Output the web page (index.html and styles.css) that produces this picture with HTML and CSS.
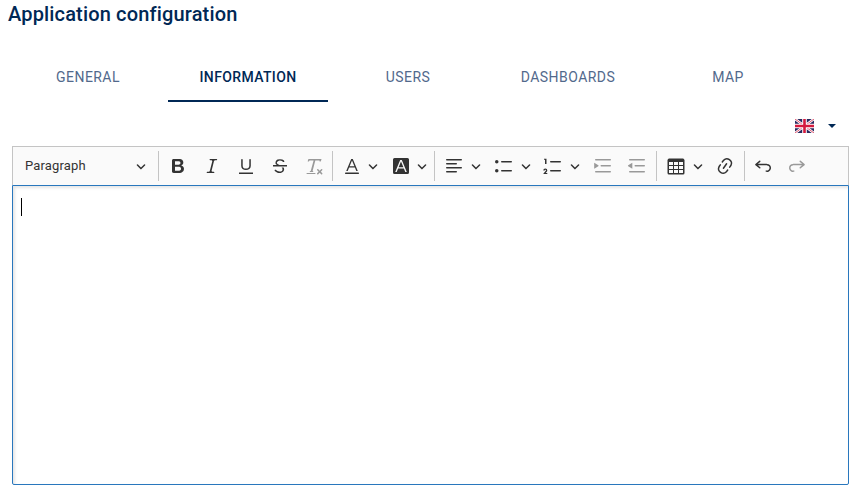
FILE: index.html
```html
<!DOCTYPE html>
<html lang="en">
<head>
<meta charset="utf-8">
<title>Application configuration</title>
<link rel="stylesheet" href="styles.css">
</head>
<body>
<svg class="defs" aria-hidden="true"><defs>
<symbol id="chev" viewBox="0 0 10 10"><path d="M.941 4.523a.75.75 0 1 1 1.06-1.06l3.006 3.005 3.005-3.005a.75.75 0 1 1 1.06 1.06l-3.549 3.55a.75.75 0 0 1-1.168-.136L.941 4.523z"/></symbol>
</defs></svg>
<h1 class="title">Application configuration</h1>
<nav class="tabs">
<a class="tab">GENERAL</a><a class="tab active">INFORMATION</a><a class="tab">USERS</a><a class="tab">DASHBOARDS</a><a class="tab">MAP</a>
</nav>
<div class="language">
<svg class="flag" viewBox="0 0 19 14"><path fill="#29295f" d="M0 0h19v14H0z"/><path stroke="#fff" stroke-width="2.6" d="M0 0l19 14M19 0L0 14"/><path stroke="#d8294a" stroke-width=".8" d="M0 0l19 14M19 0L0 14"/><path stroke="#fff" stroke-width="4.6" d="M9.5 0v14M0 7h19"/><path stroke="#d5193d" stroke-width="2.6" d="M9.5 0v14M0 7h19"/></svg>
<span class="caret-down"></span>
</div>
<div class="editor">
<div class="toolbar">
<div class="heading"><span class="label">Paragraph</span><svg class="chev"><use href="#chev"/></svg></div>
<i class="sep"></i>
<div class="group basic">
<span class="btn"><svg class="icon" viewBox="0 0 20 20"><path d="M10.187 17H5.773c-.637 0-1.092-.138-1.364-.415-.273-.277-.409-.718-.409-1.323V4.738c0-.617.14-1.062.419-1.332.279-.27.73-.406 1.354-.406h4.68c.69 0 1.288.041 1.793.124.506.083.96.242 1.36.478.341.197.644.447.906.75a3.262 3.262 0 0 1 .808 2.162c0 1.401-.722 2.426-2.167 3.075C15.05 10.175 16 11.315 16 13.01a3.756 3.756 0 0 1-2.296 3.504 6.1 6.1 0 0 1-1.517.377c-.571.073-1.238.11-2 .11zm-.217-6.217H7v4.087h3.069c1.977 0 2.965-.69 2.965-2.072 0-.707-.256-1.22-.768-1.537-.512-.319-1.277-.478-2.296-.478zM7 5.13v3.619h2.606c.729 0 1.292-.067 1.69-.2a1.6 1.6 0 0 0 .91-.765c.165-.267.247-.566.247-.897 0-.707-.26-1.176-.778-1.409-.519-.232-1.31-.348-2.375-.348H7z"/></svg></span>
<span class="btn"><svg class="icon" viewBox="0 0 20 20"><path d="m9.586 14.633.021.004c-.036.335.095.655.393.962.082.083.173.15.274.201h1.474a.6.6 0 1 1 0 1.2H5.304a.6.6 0 0 1 0-1.2h1.15c.474-.07.809-.182 1.005-.334.157-.122.291-.32.404-.597l2.416-9.55a1.053 1.053 0 0 0-.281-.823 1.12 1.12 0 0 0-.442-.296H8.15a.6.6 0 0 1 0-1.2h6.443a.6.6 0 1 1 0 1.2h-1.195c-.376.056-.65.155-.823.296-.215.175-.423.439-.623.79l-2.366 9.347z"/></svg></span>
<span class="btn"><svg class="icon" viewBox="0 0 20 20"><path d="M3 18v-1.5h14V18zM5.2 10V3.6c0-.4.4-.6.8-.6.3 0 .7.2.7.6v6.2c0 2 1.3 2.8 3.2 2.8 1.9 0 3.4-.9 3.4-2.9V3.6c0-.3.4-.5.8-.5.3 0 .7.2.7.5V10c0 2.7-2.2 4-4.9 4-2.6 0-4.7-1.2-4.7-4z"/></svg></span>
<span class="btn"><svg class="icon" viewBox="0 0 20 20"><path d="M7 16.4c-.8-.4-1.5-.9-2.2-1.5a.6.6 0 0 1-.2-.5l.3-.6h1c1 1.2 2.1 1.7 3.7 1.7 1 0 1.8-.3 2.3-.6.6-.4.6-1.2.6-1.3.2-1.2-.9-2.1-.9-2.1h2.1c.3.7.4 1.2.4 1.7v.8l-.6 1.2c-.6.8-1.1 1-1.6 1.2a6 6 0 0 1-2.4.6c-1 0-1.8-.3-2.5-.6zM6.8 9 6 8.3c-.4-.5-.5-.8-.5-1.6 0-.7.1-1.3.5-1.8.4-.6 1-1 1.6-1.3a6.3 6.3 0 0 1 4.7 0 4 4 0 0 1 1.7 1l.3.7c0 .1.2.4-.2.7-.4.2-.9.1-1 0a3 3 0 0 0-1.2-1c-.4-.2-1-.3-2-.4-.7 0-1.4.2-2 .6-.8.6-1 .8-1 1.5 0 .8.5 1 1.2 1.5.6.4 1.1.7 1.9 1H6.8zM3 10.5V9h14v1.5z"/></svg></span>
<span class="btn off"><svg class="icon" viewBox="0 0 20 20"><path d="M8.69 14.915c.053.052.173.083.36.093a.366.366 0 0 1 .345.485l-.003.01a.738.738 0 0 1-.697.497h-2.67a.374.374 0 0 1-.353-.496l.013-.038a.681.681 0 0 1 .644-.458c.197-.012.325-.043.386-.093a.28.28 0 0 0 .072-.11L9.592 4.5H6.269c-.359-.017-.609.013-.75.09-.142.078-.289.265-.442.563-.192.29-.516.464-.864.464H4.17a.43.43 0 0 1-.407-.569L4.46 3h13.08l-.62 2.043a.81.81 0 0 1-.775.574h-.114a.486.486 0 0 1-.486-.486c.001-.284-.054-.464-.167-.54-.112-.076-.367-.106-.766-.091h-3.28l-2.68 10.257c-.006.074.007.127.038.158zM3 17h8a.5.5 0 1 1 0 1H3a.5.5 0 1 1 0-1zm11.299 1.17a.75.75 0 1 1-1.06-1.06l1.414-1.415-1.415-1.414a.75.75 0 0 1 1.06-1.06l1.415 1.414 1.414-1.415a.75.75 0 1 1 1.06 1.06l-1.413 1.415 1.414 1.415a.75.75 0 0 1-1.06 1.06l-1.415-1.414-1.414 1.414z"/></svg></span>
</div>
<i class="sep"></i>
<div class="group colors">
<span class="drop"><span class="btn"><svg class="icon" viewBox="0 0 20 20"><path d="M12.4 10.3 10 4.5l-2.4 5.8h4.8zm.5 1.2H7.1L5.7 15H4.2l5-12h1.6l5 12h-1.5l-1.4-3.5zM16.3 18H3.7a.75.75 0 0 1 0-1.5h12.6a.75.75 0 0 1 0 1.5z"/></svg></span><svg class="chev"><use href="#chev"/></svg></span>
<span class="drop"><span class="btn"><svg class="icon" viewBox="0 0 20 20"><path fill-rule="evenodd" d="M3.5 2h13A1.5 1.5 0 0 1 18 3.500v13a1.500 1.500 0 0 1-1.500 1.500h-13A1.500 1.500 0 0 1 2 16.500v-13A1.500 1.500 0 0 1 3.500 2zM9.200 4l-5 12h1.500l1.400-3.500h5.800l1.400 3.500h1.500l-5-12zm.8 1.500 2.400 5.800H7.600z"/></svg></span><svg class="chev"><use href="#chev"/></svg></span>
</div>
<i class="sep"></i>
<div class="group blocks">
<span class="drop"><span class="btn"><svg class="icon" viewBox="0 0 20 20"><path class="line" d="M2.750 3.750h14.500M2.750 7.750h9.500M2.750 11.750h14.500M2.750 15.750h9.500"/></svg></span><svg class="chev"><use href="#chev"/></svg></span>
<span class="drop"><span class="btn"><svg class="icon" viewBox="0 0 20 20"><circle cx="2.750" cy="5.750" r="1.750"/><circle cx="2.750" cy="14.750" r="1.750"/><path class="line" d="M7.750 5.750h9.500M7.750 14.750h9.500"/></svg></span><svg class="chev"><use href="#chev"/></svg></span>
<span class="drop"><span class="btn"><svg class="icon" viewBox="0 0 20 20"><path d="M3.500 3v5H2V3.700H1v-1h2.500V3zM.343 17.857l2.590-3.257H2.920a.6.6 0 1 0-1.040 0H.302a2 2 0 1 1 3.995 0h-.001c-.048.405-.16.734-.333.988-.175.254-.59.692-1.244 1.312H4.300v1h-4l.043-.043z"/><path class="line" d="M7.750 5.750h9.500M7.750 14.750h9.500"/></svg></span><svg class="chev"><use href="#chev"/></svg></span>
<span class="btn off"><svg class="icon" viewBox="0 0 20 20"><path d="M1.200 6.800 5.300 9.350q.6.400 0 .8L1.200 12.700z"/><path class="line" d="M2.750 3.750h14.500M8.250 9.750h9M2.750 15.750h14.500"/></svg></span>
<span class="btn off"><svg class="icon" viewBox="0 0 20 20"><path d="M5.300 6.800 1.200 9.350q-.6.400 0 .8L5.300 12.700z"/><path class="line" d="M2.750 3.750h14.500M8.250 9.750h9M2.750 15.750h14.500"/></svg></span>
</div>
<i class="sep"></i>
<div class="group inserts">
<span class="drop"><span class="btn"><svg class="icon" viewBox="0 0 20 20"><path d="M3 6v3h4V6H3zm0 4v3h4v-3H3zm0 4v3h4v-3H3zm5 3h4v-3H8v3zm5 0h4v-3h-4v3zm4-4v-3h-4v3h4zm0-4V6h-4v3h4zm1.500 8a1.500 1.500 0 0 1-1.500 1.500H3A1.500 1.500 0 0 1 1.500 17V4c.222-.863 1.068-1.500 2-1.500h13c.932 0 1.778.637 2 1.500v13zM12 13v-3H8v3h4zm0-4V6H8v3h4z"/></svg></span><svg class="chev"><use href="#chev"/></svg></span>
<span class="btn"><svg class="icon" viewBox="0 0 20 20"><path d="m11.077 15 .991-1.416a.75.75 0 1 1 1.229.86l-1.148 1.640a.748.748 0 0 1-.217.206 5.251 5.251 0 0 1-8.503-5.955.741.741 0 0 1 .12-.274l1.147-1.639a.75.75 0 1 1 1.228.86L4.933 10.700l.006.003a3.750 3.750 0 0 0 6.132 4.294l.006.004zm5.494-5.335a.748.748 0 0 1-.12.274l-1.147 1.639a.75.75 0 1 1-1.228-.86l.86-1.230a3.750 3.750 0 0 0-6.144-4.301l-.86 1.229a.75.75 0 0 1-1.229-.86l1.148-1.640a.748.748 0 0 1 .217-.206 5.251 5.251 0 0 1 8.503 5.955zm-4.563-2.532a.75.75 0 0 1 .184 1.045l-3.155 4.505a.75.75 0 1 1-1.229-.86l3.155-4.506a.75.75 0 0 1 1.045-.184z"/></svg></span>
</div>
<i class="sep"></i>
<div class="group history">
<span class="btn"><svg class="icon" viewBox="0 0 20 20"><path d="m5.042 9.367 2.189 1.837a.75.75 0 0 1-.965 1.149l-3.788-3.180a.747.747 0 0 1-.21-.284.75.75 0 0 1 .17-.945L6.230 4.762a.75.75 0 1 1 .964 1.150L4.863 7.866h8.917A.75.75 0 0 1 14 7.900a4 4 0 1 1-1.477 7.718l.344-1.489a2.500 2.500 0 1 0 1.094-4.730l.008-.032H5.042z"/></svg></span>
<span class="btn off"><svg class="icon mirror" viewBox="0 0 20 20"><path d="m5.042 9.367 2.189 1.837a.75.75 0 0 1-.965 1.149l-3.788-3.180a.747.747 0 0 1-.21-.284.75.75 0 0 1 .17-.945L6.230 4.762a.75.75 0 1 1 .964 1.150L4.863 7.866h8.917A.75.75 0 0 1 14 7.900a4 4 0 1 1-1.477 7.718l.344-1.489a2.500 2.500 0 1 0 1.094-4.730l.008-.032H5.042z"/></svg></span>
</div>
</div>
<div class="content"><span class="cursor"></span></div>
</div>
</body>
</html>
```
FILE: styles.css
```css
* { box-sizing: border-box; }
body { margin: 0; width: 856px; height: 490px; overflow: hidden; background: #fff; font-family: Roboto, sans-serif; color: #002855; }
.defs { display: none; }
.title { margin: 0; padding: 2px 8px 0; font-size: 20px; line-height: 24px; font-weight: 500; letter-spacing: .16px; height: 52px; }
.tabs { display: flex; padding-left: 8px; }
.tab { width: 160px; height: 50px; display: flex; align-items: center; justify-content: center; font-size: 14px; letter-spacing: .45px; color: #52698c; border-bottom: 2px solid transparent; padding-top: 2px; }
.active { color: #002855; border-color: #002855; font-weight: 500; letter-spacing: .37px; }
.language { height: 44px; display: flex; justify-content: flex-end; align-items: center; padding: 4px 20px 0 0; gap: 14px; }
.flag { width: 19px; height: 14px; }
.caret-down { border: 4.500px solid transparent; border-top: 4.500px solid #002855; border-bottom: 0; }
.editor { width: 837px; height: 339px; margin-left: 12px; display: flex; flex-direction: column; }
.toolbar { height: 39px; flex: none; display: flex; align-items: center; border: 1px solid #c4c4c4; border-bottom: 0; background: #fafafa; color: #333; }
.heading { width: 145px; padding: 0 12px; display: flex; align-items: center; justify-content: space-between; font-size: 13px; letter-spacing: .15px; }
.label { padding-bottom: 2px; }
.sep { width: 1px; height: 30px; background: #c4c4c4; flex: none; }
.group { display: flex; gap: 2px; flex: none; }
.basic { width: 173px; padding-left: 3px; }
.colors { width: 101px; padding-left: 3px; }
.blocks { width: 221px; padding-left: 3px; }
.inserts { width: 87px; padding-left: 3px; }
.history { padding-left: 2px; }
.btn { width: 32px; height: 32px; display: flex; align-items: center; justify-content: center; flex: none; }
.drop { width: 47px; display: flex; align-items: center; flex: none; }
.blocks .drop { width: 47.700px; }
.blocks .chev, .inserts .chev { margin-left: 1px; }
.icon { width: 20px; height: 20px; fill: currentColor; display: block; }
.chev { width: 10px; height: 10px; fill: currentColor; flex: none; }
.line { fill: none; stroke: currentColor; stroke-width: 1.500; stroke-linecap: round; }
.off { color: #999; }
.mirror { transform: scaleX(-1); }
.content { flex: 1; border: 1px solid #2977bd; border-radius: 0 0 2px 2px; box-shadow: inset 2px 2px 3px rgba(0, 0, 0, .1); padding: 12px 8px; }
.cursor { display: block; width: 1px; height: 18px; background: #000; }
```
